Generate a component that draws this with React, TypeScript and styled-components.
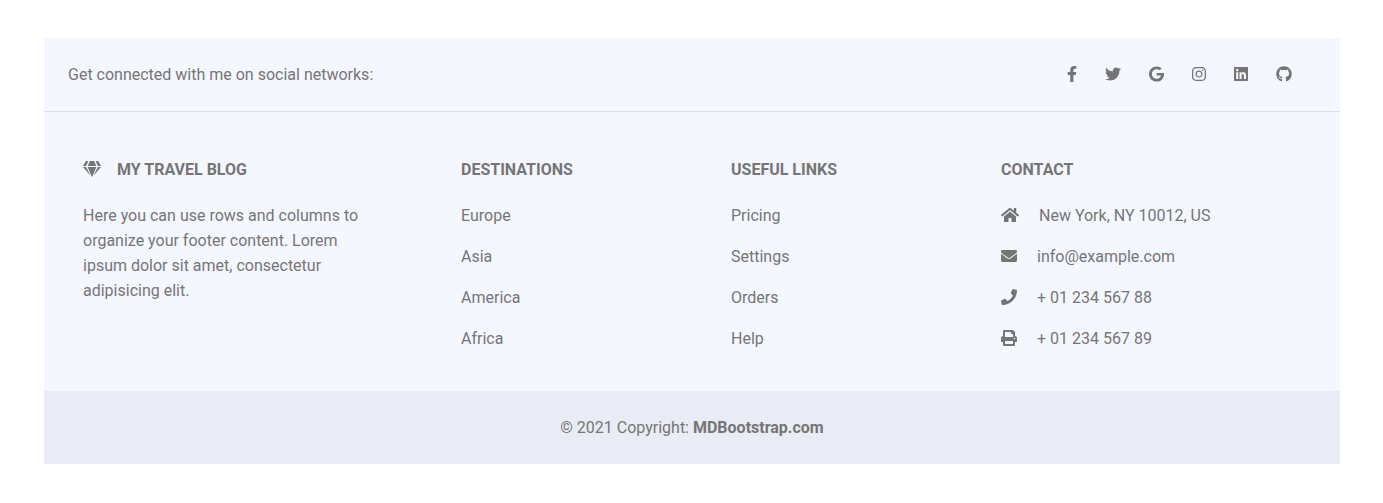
import React from "react";
import styled, { createGlobalStyle } from "styled-components";
import {
  FaFacebookF,
  FaTwitter,
  FaGoogle,
  FaInstagram,
  FaLinkedin,
  FaGithub,
  FaGem,
  FaHome,
  FaEnvelope,
  FaPhone,
  FaPrint,
} from "react-icons/fa";

const GlobalStyle = createGlobalStyle`
  *, *::before, *::after { box-sizing: border-box; }
  body {
    margin: 0;
    background: #fff;
    font-family: Roboto, "Liberation Sans", sans-serif;
    font-size: 16px;
    line-height: 25px;
    color: #757575;
  }
`;

const Page = styled.div`
  padding: 38px 43px 39px 44px;
`;

const Footer = styled.footer`
  background: #f5f7ff;
`;

const Glyph = styled.span<{ $width: number }>`
  display: inline-block;
  width: ${({ $width }) => $width}px;
  height: 16px;
  vertical-align: -2px;

  svg {
    display: block;
    width: 100%;
    height: 100%;
  }
`;

const SocialBar = styled.section`
  display: flex;
  flex-wrap: wrap;
  justify-content: space-between;
  padding: 24px;
  border-bottom: 1px solid #d9deea;
`;

const SocialLinks = styled.nav`
  display: flex;
  gap: 28px;
  margin-right: 24px;
`;

const SocialLink = styled.a`
  color: inherit;
`;

const Columns = styled.section`
  display: flex;
  justify-content: space-around;
  padding: 48px 0 24px;
`;

const Column = styled.div<{ $span: number }>`
  width: calc(100% * ${({ $span }) => $span} / 12);
  padding: 0 12px;
`;

const Heading = styled.h6`
  margin: 0 0 24px;
  font-size: 16px;
  line-height: 19px;
  font-weight: 700;
  text-transform: uppercase;

  ${Glyph} {
    margin-right: 16px;
  }
`;

const Text = styled.p`
  margin: 0 0 16px;
`;

const TextLink = styled.a`
  color: inherit;
  text-decoration: none;
`;

const ContactRow = styled(Text)`
  ${Glyph} {
    margin-right: 20px;
  }
`;

const Copyright = styled.div`
  padding: 24px;
  background: #e9ecf4;
  text-align: center;
`;

const BrandLink = styled(TextLink)`
  font-weight: 700;
`;

const social = [
  { label: "Facebook", Icon: FaFacebookF, width: 10 },
  { label: "Twitter", Icon: FaTwitter, width: 16 },
  { label: "Google", Icon: FaGoogle, width: 15 },
  { label: "Instagram", Icon: FaInstagram, width: 14 },
  { label: "LinkedIn", Icon: FaLinkedin, width: 14 },
  { label: "GitHub", Icon: FaGithub, width: 16 },
];

const lists = [
  { title: "Destinations", items: ["Europe", "Asia", "America", "Africa"] },
  { title: "Useful links", items: ["Pricing", "Settings", "Orders", "Help"] },
];

const contacts = [
  { Icon: FaHome, width: 18, text: "New York, NY 10012, US" },
  { Icon: FaEnvelope, width: 16, text: "info@example.com" },
  { Icon: FaPhone, width: 16, text: "+ 01 234 567 88" },
  { Icon: FaPrint, width: 16, text: "+ 01 234 567 89" },
];

export default function App() {
  return (
    <Page>
      <GlobalStyle />
      <Footer>
        <SocialBar>
          <span>Get connected with me on social networks:</span>
          <SocialLinks aria-label="Social networks">
            {social.map(({ label, Icon, width }) => (
              <SocialLink key={label} href="#" aria-label={label}>
                <Glyph $width={width}>
                  <Icon />
                </Glyph>
              </SocialLink>
            ))}
          </SocialLinks>
        </SocialBar>
        <Columns>
          <Column $span={3}>
            <Heading>
              <Glyph $width={18}>
                <FaGem />
              </Glyph>
              My travel blog
            </Heading>
            <Text>
              Here you can use rows and columns to organize your footer content.
              Lorem ipsum dolor sit amet, consectetur adipisicing elit.
            </Text>
          </Column>
          {lists.map(({ title, items }) => (
            <Column key={title} $span={2}>
              <Heading>{title}</Heading>
              {items.map((item) => (
                <Text key={item}>
                  <TextLink href="#">{item}</TextLink>
                </Text>
              ))}
            </Column>
          ))}
          <Column $span={3}>
            <Heading>Contact</Heading>
            {contacts.map(({ Icon, width, text }) => (
              <ContactRow key={text}>
                <Glyph $width={width}>
                  <Icon />
                </Glyph>
                {text}
              </ContactRow>
            ))}
          </Column>
        </Columns>
        <Copyright>
          © 2021 Copyright: <BrandLink href="#">MDBootstrap.com</BrandLink>
        </Copyright>
      </Footer>
    </Page>
  );
}
